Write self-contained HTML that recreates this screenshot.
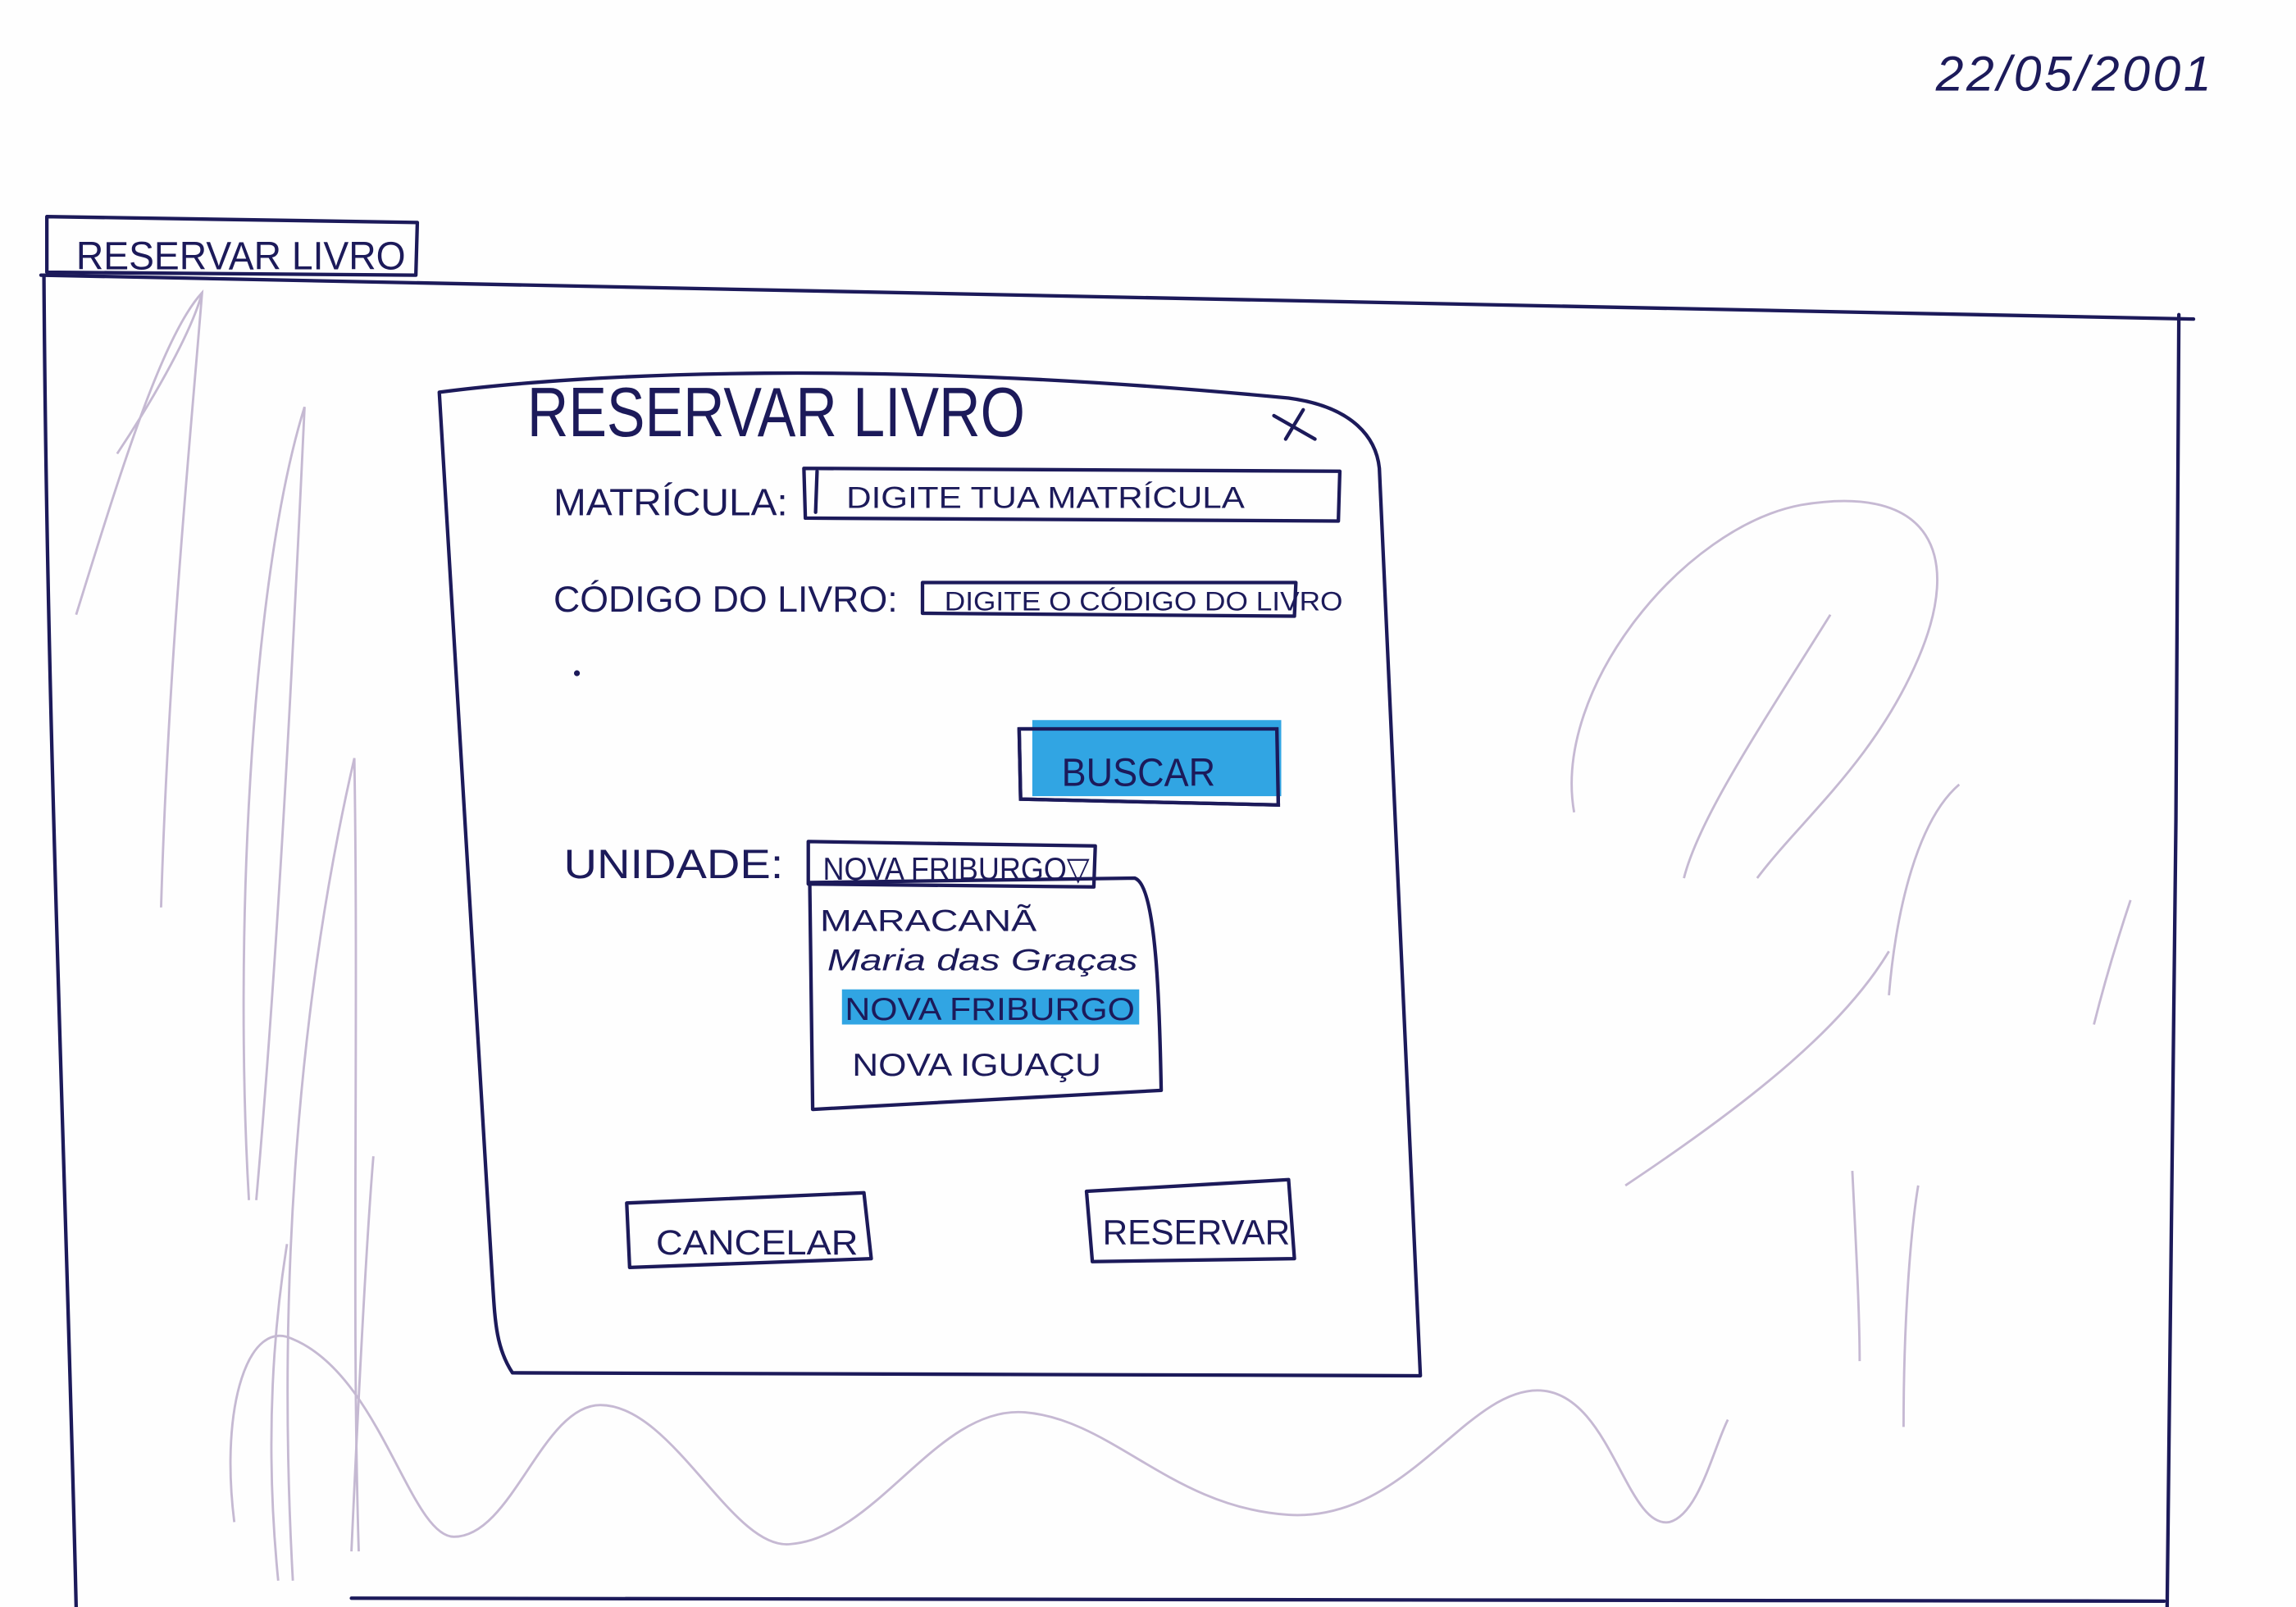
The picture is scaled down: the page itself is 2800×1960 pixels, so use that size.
<!DOCTYPE html>
<html><head><meta charset="utf-8"><style>
html,body{margin:0;padding:0;background:#fff;width:2800px;height:1960px;overflow:hidden}
svg{display:block}
text{font-family:"Liberation Sans",sans-serif;fill:#1c1a5a}
</style></head><body>
<svg width="2800" height="1960" viewBox="0 0 1568 1098" preserveAspectRatio="none" xmlns="http://www.w3.org/2000/svg">
<rect width="1568" height="1098" fill="#fefefe"/>
<g fill="none" stroke="#b8a8c8" stroke-width="1.6" opacity="0.8">
<path d="M52,420 C80,330 110,230 138,200 C130,300 115,450 110,620"/>
<path d="M80,310 C100,280 130,230 138,200"/>
<path d="M170,820 C160,650 170,400 208,278 C200,450 190,650 175,820"/>
<path d="M200,1080 C190,900 200,700 242,518 C245,700 240,900 245,1060"/>
<path d="M190,1080 C180,980 188,900 196,850"/>
<path d="M240,1060 C245,950 250,850 255,790"/>
<path d="M160,1040 C150,960 170,900 200,915 C260,940 280,1050 310,1050 C350,1050 370,960 410,960 C460,960 500,1060 540,1055 C600,1050 640,960 700,965 C760,970 800,1030 880,1035 C960,1040 1000,950 1050,950 C1100,950 1110,1045 1140,1040 C1160,1035 1170,990 1180,970"/>
<path d="M1075,555 C1060,470 1150,360 1230,345 C1320,330 1340,380 1310,450 C1280,520 1230,560 1200,600"/>
<path d="M1250,420 C1200,500 1160,560 1150,600"/>
<path d="M1290,680 C1295,620 1310,560 1338,536"/>
<path d="M1110,810 C1200,750 1260,700 1290,650"/>
<path d="M1300,975 C1300,900 1305,840 1310,810"/>
<path d="M1265,800 C1268,860 1270,900 1270,930"/>
<path d="M1430,700 C1440,660 1450,630 1455,615"/>
</g>
<g fill="none" stroke="#1c1a5a" stroke-width="2.4" stroke-linecap="round" stroke-linejoin="round">
<path d="M32,148 L285,152 L284,188 L32,186 Z"/>
<path d="M28,188 L1498,218"/>
<path d="M30,188 C32,500 45,800 52,1098"/>
<path d="M1488,215 L1486,560 L1480,1098"/>
<path d="M240,1092 L1478,1094"/>
<path d="M300,268 C400,255 600,245 880,272 C925,278 940,300 942,320 L970,940 L350,938 C338,920 338,900 336,870 L300,268"/>
<path d="M870,284 L898,300 M890,280 L878,300"/>
<path d="M549,320 L915,322 L914,356 L550,354 Z"/>
<path d="M558,322 L557,350"/>
<path d="M630,398 L885,398 L884,421 L630,419 Z"/>
<path d="M696,498 L872,498 L873,550 L697,546 Z"/>
<path d="M552,575 L748,578 L747,606 L552,604 Z"/>
<path d="M553,603 L775,600 C790,605 792,690 793,745 L555,758 Z"/>
<path d="M428,822 L590,815 L595,860 L430,866 Z"/>
<path d="M742,814 L880,806 L884,860 L746,862 Z"/>
</g>
<rect x="705" y="492" width="170" height="52" fill="#1b9be0" opacity="0.9"/>
<rect x="575" y="676" width="203" height="24" fill="#1b9be0" opacity="0.9"/>
<path d="M696,498 L872,498 L873,550 L697,546 Z" fill="none" stroke="#1c1a5a" stroke-width="2.4"/>
<text x="1322" y="62" font-size="34" font-style="italic" letter-spacing="2">22/05/2001</text>
<text x="52" y="184" font-size="27" textLength="225" lengthAdjust="spacingAndGlyphs">RESERVAR LIVRO</text>
<text x="360" y="298" font-size="48" textLength="340" lengthAdjust="spacingAndGlyphs">RESERVAR LIVRO</text>
<text x="378" y="352" font-size="26" textLength="160" lengthAdjust="spacingAndGlyphs">MATRÍCULA:</text>
<text x="578" y="347" font-size="21" textLength="272" lengthAdjust="spacingAndGlyphs">DIGITE TUA MATRÍCULA</text>
<text x="378" y="418" font-size="25" textLength="235" lengthAdjust="spacingAndGlyphs">CÓDIGO DO LIVRO:</text>
<text x="645" y="417" font-size="18" textLength="272" lengthAdjust="spacingAndGlyphs">DIGITE O CÓDIGO DO LIVRO</text>
<text x="725" y="537" font-size="27" textLength="105" lengthAdjust="spacingAndGlyphs">BUSCAR</text>
<text x="385" y="600" font-size="28" textLength="150" lengthAdjust="spacingAndGlyphs">UNIDADE:</text>
<text x="562" y="601" font-size="22" textLength="182" lengthAdjust="spacingAndGlyphs">NOVA FRIBURGO▽</text>
<text x="560" y="636" font-size="21" textLength="148" lengthAdjust="spacingAndGlyphs">MARACANÃ</text>
<text x="565" y="663" font-size="21" font-style="italic" textLength="212" lengthAdjust="spacingAndGlyphs">Maria das Graças</text>
<text x="577" y="697" font-size="22" textLength="198" lengthAdjust="spacingAndGlyphs">NOVA FRIBURGO</text>
<text x="582" y="735" font-size="22" textLength="170" lengthAdjust="spacingAndGlyphs">NOVA IGUAÇU</text>
<text x="448" y="857" font-size="24" textLength="138" lengthAdjust="spacingAndGlyphs">CANCELAR</text>
<text x="753" y="850" font-size="24" textLength="128" lengthAdjust="spacingAndGlyphs">RESERVAR</text>
<circle cx="394" cy="460" r="2" fill="#1c1a5a"/>
</svg>
</body></html>
